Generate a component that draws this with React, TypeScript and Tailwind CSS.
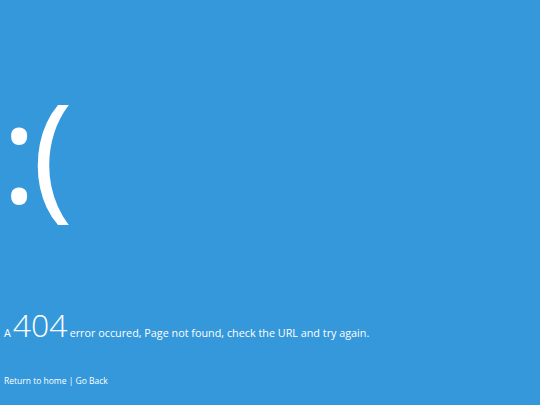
export default function App() {
  return (
    <div className="w-[540px] h-[405px] bg-[#3498db] text-white overflow-hidden flex flex-col" style={{ fontFamily: '"Open Sans", sans-serif' }}>
      <div className="pt-[74px] pl-[1px] text-[138px] leading-[150px] font-normal tracking-[-5px]">:(</div>
      <div className="mt-[86px] pl-[4px] flex items-baseline text-[10.8px] font-medium">
        <span>A</span>
        <span className="text-[32px] leading-[30px] mx-[2px] font-light">404</span>
        <span>error occured, Page not found, check the URL and try again.</span>
      </div>
      <div className="mt-[34px] pl-[4px] text-[8.5px] font-medium">Return to home | Go Back</div>
    </div>
  );
}
